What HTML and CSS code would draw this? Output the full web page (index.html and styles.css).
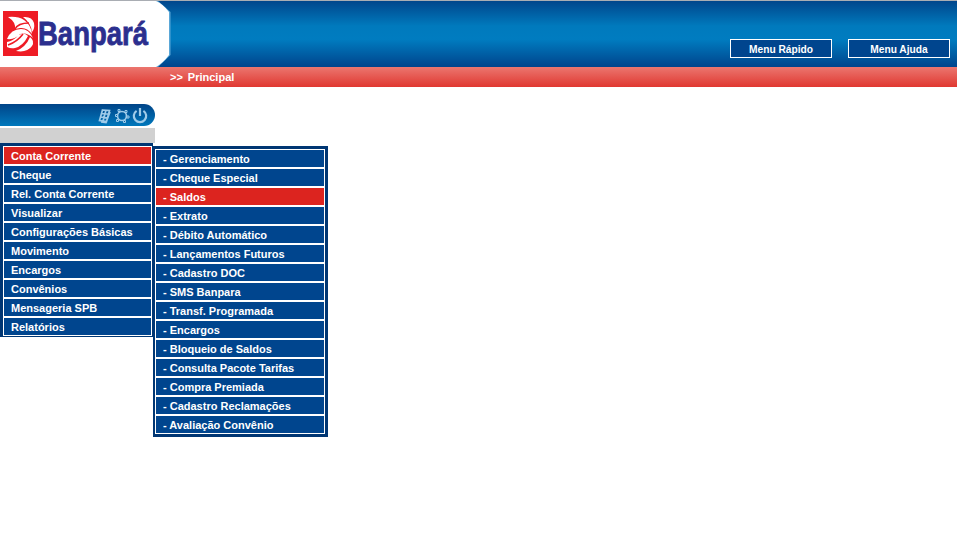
FILE: index.html
```
<!DOCTYPE html>
<html lang="pt-BR">
<head>
<meta charset="utf-8">
<title>Banpará</title>
<link rel="stylesheet" href="styles.css">
</head>
<body>
<header class="header">
  <div class="brand">
    <svg class="brand-shape" width="172" height="66" viewBox="0 0 172 66">
      <path d="M0 0H158L170.500 11V54L158 66H0Z" fill="#5aa7d7"/>
      <path d="M0 0H156Q163 3 169 11V54Q163 62 156 66H0Z" fill="#fff"/>
    </svg>
    <svg class="mark" width="35" height="45" viewBox="0 0 35 45">
      <path fill="#ee1c25" d="M0 0H35V45H0Z"/>
      <path fill="#fff" d="M5 6Q15 5 21 9Q28 14 29 23Q24 16 17 17L12 18Q13 11 5 6ZM20 6Q29 5 31 12Q32 18 29 21Q28 12 20 6ZM4 28Q8 18 18 18Q26 18 30 27Q24 21 17 23Q12 29 4 28ZM4 36V31Q10 30 16 24Q21 21 25 25Q20 35 12 37Q8 38 4 36ZM13 40Q23 36 27 26Q32 30 29 35Q24 42 13 40Z"/>
      <path fill="none" stroke="#ee1c25" stroke-width="1.600" d="M12 18Q15 12 26 12M5 34Q14 31 20 23"/>
    </svg>
    <svg class="wordmark" width="116" height="54" viewBox="0 0 116 54">
      <text x="-1" y="34" textLength="110" lengthAdjust="spacingAndGlyphs">Banpará</text>
    </svg>
  </div>
  <nav class="quick">
    <a class="button">Menu Rápido</a>
    <a class="button">Menu Ajuda</a>
  </nav>
</header>
<div class="crumb"><span>&gt;&gt;</span><span>Principal</span></div>
<div class="tools">
  <svg width="50" height="16" viewBox="0 0 50 16" fill="none" stroke="#9fcbe9">
    <path d="M4.500 2L11.500 2.500L8.500 13.500L1.500 12.500ZM8 2L5 13M3.500 5.500L11 6M2.500 9L10 10M3 14L8 14.500L12 4" stroke-width="1.700"/>
    <circle cx="24" cy="8" r="4.500" stroke-width="1.700"/>
    <path d="M20 1.500h2v2h-2ZM27 2.500h2v2h-2ZM17.500 6.500h2v2h-2ZM29 8h2v2h-2ZM18.500 11.500h2v2h-2ZM25.500 12.500h2v2h-2Z" fill="#0067aa" stroke-width="1"/>
    <path d="M38.600 2.800A6.200 6.200 0 1 0 45.400 2.800M42 0V8" stroke-width="2.200"/>
  </svg>
</div>
<div class="strip"></div>
<main class="menus">
  <ul class="menu main-menu">
    <li class="active">Conta Corrente</li>
    <li>Cheque</li>
    <li>Rel. Conta Corrente</li>
    <li>Visualizar</li>
    <li>Configurações Básicas</li>
    <li>Movimento</li>
    <li>Encargos</li>
    <li>Convênios</li>
    <li>Mensageria SPB</li>
    <li>Relatórios</li>
  </ul>
  <ul class="menu sub-menu">
    <li>- Gerenciamento</li>
    <li>- Cheque Especial</li>
    <li class="active">- Saldos</li>
    <li>- Extrato</li>
    <li>- Débito Automático</li>
    <li>- Lançamentos Futuros</li>
    <li>- Cadastro DOC</li>
    <li>- SMS Banpara</li>
    <li>- Transf. Programada</li>
    <li>- Encargos</li>
    <li>- Bloqueio de Saldos</li>
    <li>- Consulta Pacote Tarifas</li>
    <li>- Compra Premiada</li>
    <li>- Cadastro Reclamações</li>
    <li>- Avaliação Convênio</li>
  </ul>
</main>
</body>
</html>
```
FILE: styles.css
```
* { box-sizing: border-box; }
body {
  margin: 0;
  background: #fff;
  color: #fff;
  font: bold 11px/17px "Liberation Sans", Arial, sans-serif;
}
.header {
  display: flex;
  justify-content: space-between;
  height: 67px;
  border-top: 1px solid #a9adb3;
  background: linear-gradient(#00468c 0%, #007abd 38%, #007cc0 58%, #00448c 100%);
}
.brand {
  display: grid;
  grid-template-columns: 3px 35px 134px;
  width: 172px;
  height: 66px;
}
.brand-shape { grid-area: 1 / 1 / 2 / 4; }
.mark { grid-area: 1 / 2; margin-top: 10px; }
.wordmark { grid-area: 1 / 3; margin: 10px 0 0 1px; overflow: visible; }
.wordmark text {
  font: bold 33px "Liberation Sans", Arial, sans-serif;
  fill: #2b2f8e;
  stroke: #2b2f8e;
  stroke-width: .8px;
}
.quick {
  display: flex;
  gap: 16px;
  padding: 38px 7px 0 0;
}
.button {
  width: 102px;
  height: 19px;
  padding-top: 1px;
  border: 1px solid #fff;
  background: #00458e;
  font-size: 10.2px;
  text-align: center;
}
.crumb {
  display: flex;
  gap: 5px;
  height: 20px;
  padding-left: 170px;
  line-height: 20px;
  background: linear-gradient(#eb766f, #e03831);
}
.tools {
  display: flex;
  justify-content: flex-end;
  width: 155px;
  height: 22px;
  margin-top: 17px;
  padding: 4px 7px 0 0;
  border-radius: 0 11px 11px 0;
  background: linear-gradient(#004488, #0078bc);
}
.strip {
  width: 155px;
  height: 15px;
  margin-top: 2px;
  background: #d1d1d1;
}
.menus {
  display: flex;
  align-items: flex-start;
}
.menu {
  margin: 0;
  list-style: none;
  background: #003673;
}
.menu li {
  height: 19px;
  padding: 1px 0 0 7px;
  border: 1px solid #fff;
  background: #00458e;
  white-space: nowrap;
}
.menu .active { background: #dc241f; }
.main-menu { width: 153px; padding: 3px 1px 1px 3px; }
.sub-menu { width: 175px; margin-top: 3px; padding: 3px 3px 3px 2px; }
```
